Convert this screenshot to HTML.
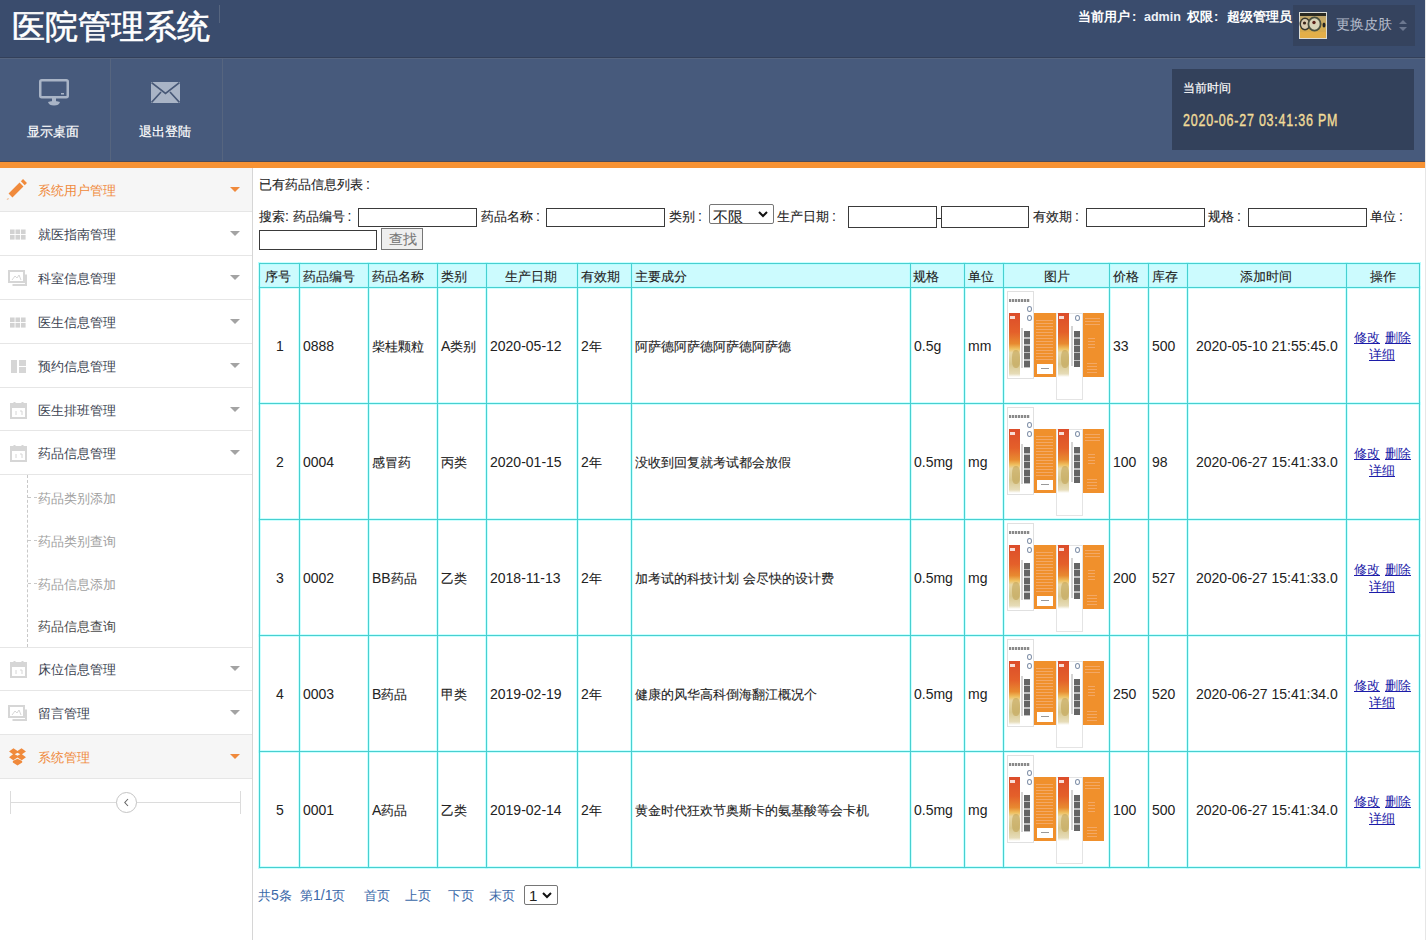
<!DOCTYPE html>
<html><head><meta charset="utf-8"><style>
*{margin:0;padding:0;box-sizing:border-box}
html,body{width:1427px;height:940px;overflow:hidden;background:#fff;font-family:"Liberation Sans",sans-serif;font-size:13px;color:#333}
.a{position:absolute;white-space:nowrap}
.l{font-size:1.077em}
.k{-webkit-text-stroke-width:0.3px}
.t17{line-height:17px}
#top{position:absolute;left:0;top:0;width:1425px;height:57px;background:#3a4c6d}
#topb{position:absolute;left:0;top:57px;width:1425px;height:1px;background:#33405a}
#tool{position:absolute;left:0;top:58px;width:1425px;height:103px;background:#475a7c}
#toolb{position:absolute;left:0;top:58px;width:1425px;height:1px;background:#55647f}
#orange{position:absolute;left:0;top:162px;width:1425px;height:6px;background:#f79233}
#orb{position:absolute;left:0;top:161px;width:1425px;height:1px;background:#4d4c58}
#rstrip{position:absolute;left:1425px;top:0;width:2px;height:940px;background:#fff;border-left:1px solid #e6e6e6}
.title{left:12px;top:5px;font-size:33px;color:#fff;line-height:44px;-webkit-text-stroke-width:0.6px}
.sep{position:absolute;background:#56657f}
.tl{color:#fff;font-size:13px;line-height:17px;-webkit-text-stroke-width:0.2px}
#side{position:absolute;left:0;top:168px;width:253px;height:772px;border-right:1px solid #d6d6d6;background:#fff}
.mi{position:absolute;left:0;width:252px;border-bottom:1px solid #e6e6e6}
.mi .t{position:absolute;left:38px;top:14px;line-height:17px;color:#3a4250;font-size:13px}
.mi.on{background:#f6f6f6}
.mi.on .t{color:#f08a3c}
.mi .arr{position:absolute;left:230px;top:19px;width:0;height:0;border-left:5px solid transparent;border-right:5px solid transparent;border-top:5px solid #a3a3a3}
.mi.on .arr{border-top-color:#f08a3c}
.mi svg{position:absolute;left:8px;top:12px}
.st{position:absolute;left:38px;line-height:17px;color:#a0a0a0}
.ln{position:absolute;background:#48cfd0}
.lh{position:absolute;background:rgba(170,255,255,.6)}
.c{position:absolute;white-space:nowrap;line-height:17px;color:#222;-webkit-text-stroke-width:0.1px}
.lnk{color:#1c1ca8;text-decoration:underline;-webkit-text-stroke-width:0!important}
.c .l{-webkit-text-stroke-width:0}
.inp{position:absolute;border:1px solid #3a3a3a;background:#fff}
.pg{position:absolute;color:#3a68a8;line-height:17px}
</style></head><body>
<div id="top"></div><div id="topb"></div><div id="tool"></div><div id="toolb"></div><div id="orange"></div><div id="orb"></div><div id="rstrip"></div>
<div class="a title">医院管理系统</div>
<div class="sep" style="left:219px;top:5px;width:1px;height:18px"></div>
<div class="a t17" style="left:1078px;top:8px;color:#fff;font-weight:bold">当前用户</div>
<div class="a t17" style="left:1187px;top:8px;color:#fff;font-weight:bold">权限</div>
<div class="a t17" style="left:1227px;top:8px;color:#fff;font-weight:bold">超级管理员</div>
<div class="a t17" style="left:1132px;top:8px;color:#fff;font-weight:bold">:</div>
<div class="a t17" style="left:1214px;top:8px;color:#fff;font-weight:bold">:</div>
<div class="a t17" style="left:1144px;top:9px;color:#eef2f8;font-weight:bold;font-size:12.5px">admin</div>
<div class="a" style="left:1293px;top:5px;width:122px;height:41px;background:#35435e"></div>
<svg class="a" style="left:1299px;top:12px" width="28" height="27" viewBox="0 0 28 27"><defs><linearGradient id="mg" x1="0" y1="0" x2="0" y2="1"><stop offset="0" stop-color="#b7a070"/><stop offset="0.5" stop-color="#cfae5a"/><stop offset="1" stop-color="#e0a640"/></linearGradient></defs><rect x="0" y="0" width="28" height="27" fill="#dcdcd4"/><rect x="1" y="1" width="26" height="25" fill="url(#mg)"/><rect x="1" y="1" width="26" height="3" fill="#2a2a22"/><ellipse cx="6" cy="12" rx="5.5" ry="6.5" fill="#3a3a30"/><ellipse cx="6" cy="12" rx="4" ry="5" fill="#d9ccb0"/><circle cx="5.5" cy="11" r="1.6" fill="#3a2418"/><ellipse cx="15.5" cy="12" rx="7" ry="7.5" fill="#4a5040"/><ellipse cx="15.5" cy="12" rx="5.2" ry="5.8" fill="#d8d4b8"/><circle cx="15" cy="10.5" r="1.7" fill="#5a2018"/><ellipse cx="25" cy="13" rx="1.5" ry="2.5" fill="#222"/><rect x="1" y="20" width="26" height="6" fill="#e5b04a" opacity="0.8"/></svg>
<div class="a t17" style="left:1336px;top:16px;color:#b4bccb;font-size:14px">更换皮肤</div>
<svg class="a" style="left:1398px;top:19px" width="10" height="13" viewBox="0 0 10 13" fill="#6c7890"><path d="M1 5 L5 1 L9 5Z M1 8 L5 12 L9 8Z"/></svg>
<div class="sep" style="left:110px;top:58px;width:1px;height:103px"></div>
<div class="sep" style="left:222px;top:58px;width:1px;height:103px"></div>
<svg class="a" style="left:39px;top:79px" width="30" height="27" viewBox="0 0 30 27"><rect x="1.25" y="1.25" width="27.5" height="17" rx="1.5" fill="none" stroke="#a9b4c6" stroke-width="2.5"/><rect x="22" y="14" width="3" height="1.5" fill="#a9b4c6"/><rect x="13" y="19" width="4" height="4" fill="#a9b4c6"/><path d="M9 23 Q15 21 21 23 Q20 26.5 15 26.5 Q10 26.5 9 23Z" fill="#a9b4c6"/></svg>
<div class="a tl" style="left:27px;top:123px">显示桌面</div>
<svg class="a" style="left:151px;top:82px" width="29" height="21" viewBox="0 0 29 21"><rect x="0" y="0" width="29" height="21" fill="#a9b4c6"/><path d="M0.5 0.5 L14.5 11.5 L28.5 0.5 M0.5 20.5 L10 10 M28.5 20.5 L19 10" fill="none" stroke="#475877" stroke-width="1.6"/></svg>
<div class="a tl" style="left:139px;top:123px">退出登陆</div>
<div class="a" style="left:1172px;top:69px;width:242px;height:81px;background:#33415b"></div>
<div class="a t17" style="left:1183px;top:80px;color:#fff;font-size:12px;-webkit-text-stroke-width:0.15px">当前时间</div>
<div class="a t17" style="left:1183px;top:112px;color:#f0db98;font-size:16px;-webkit-text-stroke-width:0.4px;letter-spacing:1px;transform:scaleX(0.78);transform-origin:0 0">2020-06-27 03:41:36 PM</div>
<div id="side"></div>
<div class="mi on" style="top:168px;height:44px"><svg width="24" height="24" viewBox="0 0 24 24" style="left:4px;top:10px"><g stroke="#f08a3c" stroke-width="5.5" fill="none"><path d="M6.5 17.5 L17.5 6.5" /><path d="M18.8 5.2 L21 3"/></g><path d="M4 20 L2.5 22 L5 21Z" fill="#f08a3c" opacity="0.7"/></svg><div class="t">系统用户管理</div><div class="arr"></div></div>
<div class="mi" style="top:212px;height:44px"><svg width="20" height="20" viewBox="0 0 20 20" fill="#d2d2d2"><rect x="2" y="5.5" width="4.6" height="4.6"/><rect x="7.5" y="5.5" width="4.6" height="4.6"/><rect x="13" y="5.5" width="4.6" height="4.6"/><rect x="2" y="11" width="4.6" height="4.6"/><rect x="7.5" y="11" width="4.6" height="4.6"/><rect x="13" y="11" width="4.6" height="4.6"/></svg><div class="t">就医指南管理</div><div class="arr"></div></div>
<div class="mi" style="top:256px;height:44px"><svg width="20" height="20" viewBox="0 0 20 20" style="left:8px;top:12px" fill="none" stroke="#d6d6d6"><rect x="1" y="3" width="15" height="11" stroke-width="2"/><path d="M4.5 17 H18 V6.5" stroke-width="2"/><path d="M4 12 L7 8 L9 10 L11 7 L13 12" stroke-width="1"/></svg><div class="t">科室信息管理</div><div class="arr"></div></div>
<div class="mi" style="top:300px;height:44px"><svg width="20" height="20" viewBox="0 0 20 20" fill="#d2d2d2"><rect x="2" y="5.5" width="4.6" height="4.6"/><rect x="7.5" y="5.5" width="4.6" height="4.6"/><rect x="13" y="5.5" width="4.6" height="4.6"/><rect x="2" y="11" width="4.6" height="4.6"/><rect x="7.5" y="11" width="4.6" height="4.6"/><rect x="13" y="11" width="4.6" height="4.6"/></svg><div class="t">医生信息管理</div><div class="arr"></div></div>
<div class="mi" style="top:344px;height:44px"><svg width="20" height="20" viewBox="0 0 20 20" fill="#d6d6d6"><rect x="3" y="4" width="6" height="13"/><rect x="11" y="4" width="7" height="6"/><rect x="11" y="11" width="7" height="6"/></svg><div class="t">预约信息管理</div><div class="arr"></div></div>
<div class="mi" style="top:388px;height:43px"><svg width="20" height="20" viewBox="0 0 20 20" style="left:8px;top:12px"><rect x="3" y="4" width="15" height="14" fill="none" stroke="#d6d6d6" stroke-width="2"/><rect x="3" y="4" width="15" height="4" fill="#d6d6d6"/><path d="M6.5 2 V5 M14.5 2 V5" stroke="#d6d6d6" stroke-width="2"/><path d="M8 11 V15 M12 11 H14 V15" stroke="#d6d6d6" stroke-width="1" fill="none"/></svg><div class="t">医生排班管理</div><div class="arr"></div></div>
<div class="mi" style="top:431px;height:44px"><svg width="20" height="20" viewBox="0 0 20 20" style="left:8px;top:12px"><rect x="3" y="4" width="15" height="14" fill="none" stroke="#d6d6d6" stroke-width="2"/><rect x="3" y="4" width="15" height="4" fill="#d6d6d6"/><path d="M6.5 2 V5 M14.5 2 V5" stroke="#d6d6d6" stroke-width="2"/><path d="M8 11 V15 M12 11 H14 V15" stroke="#d6d6d6" stroke-width="1" fill="none"/></svg><div class="t">药品信息管理</div><div class="arr"></div></div>
<div class="mi" style="top:647px;height:44px"><svg width="20" height="20" viewBox="0 0 20 20" style="left:8px;top:12px"><rect x="3" y="4" width="15" height="14" fill="none" stroke="#d6d6d6" stroke-width="2"/><rect x="3" y="4" width="15" height="4" fill="#d6d6d6"/><path d="M6.5 2 V5 M14.5 2 V5" stroke="#d6d6d6" stroke-width="2"/><path d="M8 11 V15 M12 11 H14 V15" stroke="#d6d6d6" stroke-width="1" fill="none"/></svg><div class="t">床位信息管理</div><div class="arr"></div></div>
<div class="mi" style="top:691px;height:44px"><svg width="20" height="20" viewBox="0 0 20 20" style="left:8px;top:12px" fill="none" stroke="#d6d6d6"><rect x="1" y="3" width="15" height="11" stroke-width="2"/><path d="M4.5 17 H18 V6.5" stroke-width="2"/><path d="M4 12 L7 8 L9 10 L11 7 L13 12" stroke-width="1"/></svg><div class="t">留言管理</div><div class="arr"></div></div>
<div class="mi on" style="top:735px;height:44px"><svg width="17" height="18" viewBox="0 0 16 17" style="left:9px;top:13px" fill="#f08a3c"><path d="M0 3.2 L4.2 0.3 L8 2.8 L11.8 0.3 L16 3.2 L12.2 6 L16 8.8 L12 11.5 L8 8.9 L4 11.5 L0 8.8 L3.8 6Z"/><path d="M8 4.6 L10.6 6 L8 7.4 L5.4 6Z" fill="#f6f6f6"/><path d="M3.6 12.3 L8 10.2 L12.4 12.3 L12.4 13.6 L8 16.6 L3.6 13.6Z"/></svg><div class="t">系统管理</div><div class="arr"></div></div>
<div class="a" style="left:27px;top:475px;height:172px;border-left:1px dashed #c8c8c8"></div>
<div class="a" style="left:0;top:647px;width:252px;height:1px;background:#e6e6e6"></div>
<div class="a" style="left:28px;top:497px;width:9px;border-top:1px dashed #c8c8c8"></div>
<div class="st" style="top:490px;color:#a0a0a0">药品类别添加</div>
<div class="a" style="left:28px;top:540px;width:9px;border-top:1px dashed #c8c8c8"></div>
<div class="st" style="top:533px;color:#a0a0a0">药品类别查询</div>
<div class="a" style="left:28px;top:583px;width:9px;border-top:1px dashed #c8c8c8"></div>
<div class="st" style="top:576px;color:#a0a0a0">药品信息添加</div>
<div class="st" style="top:618px;color:#4a4a4a">药品信息查询</div>
<div class="a" style="left:10px;top:802px;width:231px;height:1px;background:#dcdcdc"></div>
<div class="a" style="left:10px;top:791px;width:1px;height:23px;background:#dcdcdc"></div>
<div class="a" style="left:240px;top:791px;width:1px;height:23px;background:#dcdcdc"></div>
<div class="a" style="left:116px;top:792px;width:21px;height:21px;border:1.5px solid #c4c4c4;border-radius:50%;background:#fff"></div>
<svg class="a" style="left:121px;top:797px" width="11" height="11" viewBox="0 0 11 11"><path d="M7 2 L3.8 5.5 L7 9" fill="none" stroke="#666" stroke-width="1.1"/></svg>
<div class="c" style="left:259px;top:176px">已有药品信息列表<span style="margin-left:3px"><span class="l">:</span></span></div>
<div class="c" style="left:259px;top:208px">搜索<span class="l">:</span> 药品编号<span style="margin-left:3px"><span class="l">:</span></span></div>
<div class="inp" style="left:358px;top:208px;width:119px;height:19px"></div>
<div class="c" style="left:481px;top:208px">药品名称<span style="margin-left:3px"><span class="l">:</span></span></div>
<div class="inp" style="left:546px;top:208px;width:119px;height:19px"></div>
<div class="c" style="left:669px;top:208px">类别<span style="margin-left:3px"><span class="l">:</span></span></div>
<div class="a" style="left:709px;top:204px;width:65px;height:20px;border:1px solid #767676;border-radius:2px;background:#fff;overflow:hidden"><div class="c" style="left:3px;top:4px;font-size:14.5px">不限</div></div>
<svg class="a" style="left:757px;top:209px" width="12" height="10" viewBox="0 0 12 10"><path d="M2 3 L6 7 L10 3" fill="none" stroke="#111" stroke-width="2"/></svg>
<div class="c" style="left:777px;top:208px">生产日期<span style="margin-left:3px"><span class="l">:</span></span></div>
<div class="inp" style="left:848px;top:206px;width:89px;height:22px"></div>
<div class="a" style="left:937px;top:218px;width:4px;height:1px;background:#222"></div>
<div class="inp" style="left:941px;top:206px;width:88px;height:22px"></div>
<div class="c" style="left:1033px;top:208px">有效期<span style="margin-left:3px"><span class="l">:</span></span></div>
<div class="inp" style="left:1086px;top:208px;width:119px;height:19px"></div>
<div class="c" style="left:1208px;top:208px">规格<span style="margin-left:3px"><span class="l">:</span></span></div>
<div class="inp" style="left:1248px;top:208px;width:119px;height:19px"></div>
<div class="c" style="left:1370px;top:208px">单位<span style="margin-left:3px"><span class="l">:</span></span></div>
<div class="inp" style="left:259px;top:230px;width:118px;height:20px"></div>
<div class="a" style="left:381px;top:228px;width:42px;height:22px;border:1px solid #767676;background:#efefef"></div>
<div class="c" style="left:389px;top:231px;color:#777;font-size:14px">查找</div>
<div class="a" style="left:259px;top:263px;width:1160px;height:24px;background:#ccfbfe"></div>
<div class="lh" style="left:258px;top:262px;width:3px;height:607px"></div>
<div class="lh" style="left:298px;top:262px;width:3px;height:607px"></div>
<div class="lh" style="left:367px;top:262px;width:3px;height:607px"></div>
<div class="lh" style="left:436px;top:262px;width:3px;height:607px"></div>
<div class="lh" style="left:485px;top:262px;width:3px;height:607px"></div>
<div class="lh" style="left:576px;top:262px;width:3px;height:607px"></div>
<div class="lh" style="left:630px;top:262px;width:3px;height:607px"></div>
<div class="lh" style="left:909px;top:262px;width:3px;height:607px"></div>
<div class="lh" style="left:963px;top:262px;width:3px;height:607px"></div>
<div class="lh" style="left:1002px;top:262px;width:3px;height:607px"></div>
<div class="lh" style="left:1108px;top:262px;width:3px;height:607px"></div>
<div class="lh" style="left:1147px;top:262px;width:3px;height:607px"></div>
<div class="lh" style="left:1186px;top:262px;width:3px;height:607px"></div>
<div class="lh" style="left:1345px;top:262px;width:3px;height:607px"></div>
<div class="lh" style="left:1418px;top:262px;width:3px;height:607px"></div>
<div class="lh" style="left:258px;top:262px;width:1163px;height:3px"></div>
<div class="lh" style="left:258px;top:286px;width:1163px;height:3px"></div>
<div class="lh" style="left:258px;top:402px;width:1163px;height:3px"></div>
<div class="lh" style="left:258px;top:518px;width:1163px;height:3px"></div>
<div class="lh" style="left:258px;top:634px;width:1163px;height:3px"></div>
<div class="lh" style="left:258px;top:750px;width:1163px;height:3px"></div>
<div class="lh" style="left:258px;top:866px;width:1163px;height:3px"></div>
<div class="ln" style="left:259px;top:263px;width:1px;height:605px"></div>
<div class="ln" style="left:299px;top:263px;width:1px;height:605px"></div>
<div class="ln" style="left:368px;top:263px;width:1px;height:605px"></div>
<div class="ln" style="left:437px;top:263px;width:1px;height:605px"></div>
<div class="ln" style="left:486px;top:263px;width:1px;height:605px"></div>
<div class="ln" style="left:577px;top:263px;width:1px;height:605px"></div>
<div class="ln" style="left:631px;top:263px;width:1px;height:605px"></div>
<div class="ln" style="left:910px;top:263px;width:1px;height:605px"></div>
<div class="ln" style="left:964px;top:263px;width:1px;height:605px"></div>
<div class="ln" style="left:1003px;top:263px;width:1px;height:605px"></div>
<div class="ln" style="left:1109px;top:263px;width:1px;height:605px"></div>
<div class="ln" style="left:1148px;top:263px;width:1px;height:605px"></div>
<div class="ln" style="left:1187px;top:263px;width:1px;height:605px"></div>
<div class="ln" style="left:1346px;top:263px;width:1px;height:605px"></div>
<div class="ln" style="left:1419px;top:263px;width:1px;height:605px"></div>
<div class="ln" style="left:259px;top:263px;width:1161px;height:1px"></div>
<div class="ln" style="left:259px;top:287px;width:1161px;height:1px"></div>
<div class="ln" style="left:259px;top:403px;width:1161px;height:1px"></div>
<div class="ln" style="left:259px;top:519px;width:1161px;height:1px"></div>
<div class="ln" style="left:259px;top:635px;width:1161px;height:1px"></div>
<div class="ln" style="left:259px;top:751px;width:1161px;height:1px"></div>
<div class="ln" style="left:259px;top:867px;width:1161px;height:1px"></div>
<div class="c" style="left:265px;top:268px">序号</div>
<div class="c" style="left:303px;top:268px">药品编号</div>
<div class="c" style="left:372px;top:268px">药品名称</div>
<div class="c" style="left:441px;top:268px">类别</div>
<div class="c" style="left:505px;top:268px">生产日期</div>
<div class="c" style="left:581px;top:268px">有效期</div>
<div class="c" style="left:635px;top:268px">主要成分</div>
<div class="c" style="left:913px;top:268px">规格</div>
<div class="c" style="left:968px;top:268px">单位</div>
<div class="c" style="left:1044px;top:268px">图片</div>
<div class="c" style="left:1113px;top:268px">价格</div>
<div class="c" style="left:1152px;top:268px">库存</div>
<div class="c" style="left:1240px;top:268px">添加时间</div>
<div class="c" style="left:1370px;top:268px">操作</div>
<div class="c" style="left:276px;top:338px"><span class="l">1</span></div>
<div class="c" style="left:303px;top:338px"><span class="l">0888</span></div>
<div class="c" style="left:372px;top:338px">柴桂颗粒</div>
<div class="c" style="left:441px;top:338px"><span class="l">A</span>类别</div>
<div class="c" style="left:490px;top:338px"><span class="l">2020-05-12</span></div>
<div class="c" style="left:581px;top:338px"><span class="l">2</span>年</div>
<div class="c" style="left:635px;top:338px">阿萨德阿萨德阿萨德阿萨德</div>
<div class="c" style="left:914px;top:338px"><span class="l">0.5g</span></div>
<div class="c" style="left:968px;top:338px"><span class="l">mm</span></div>
<div class="c" style="left:1113px;top:338px"><span class="l">33</span></div>
<div class="c" style="left:1152px;top:338px"><span class="l">500</span></div>
<div class="c" style="left:1196px;top:338px"><span class="l">2020-05-10 21:55:45.0</span></div>
<div class="a" style="left:1003px;top:288px;width:104px;height:114px"><div class="a" style="left:4px;top:3px;width:27px;height:88px;border:1px solid #e0e0e0;background:#fff"></div><div class="a" style="left:6px;top:11px;width:21px;height:3px;background:repeating-linear-gradient(90deg,#8a8a8a 0 2px,#e0e0e0 2px 3px)"></div><div class="a" style="left:24px;top:18px;width:5px;height:6px;border:1px solid #8090a8;border-radius:50%"></div><div class="a" style="left:24px;top:27px;width:5px;height:6px;border:1px solid #8090a8;border-radius:50%"></div><div class="a" style="left:6px;top:25px;width:11px;height:64px;background:linear-gradient(#dc4c2a 0%,#e4602a 30%,#e88a30 48%,#efc060 56%,#e8d8a8 62%,#d8c890 80%,#e6dcb8 95%,#fff 100%)"></div><div class="a" style="left:7px;top:28px;width:5px;height:3px;background:#fff;opacity:.8"></div><div class="a" style="left:9px;top:62px;width:8px;height:18px;background:#c0a050;opacity:.55;border-radius:40%"></div><div class="a" style="left:21px;top:43px;width:6px;height:37px;background:repeating-linear-gradient(#3e3e3e 0 6px,#b0b0b0 6px 7.5px);opacity:.8"></div><div class="a" style="left:18px;top:40px;width:2px;height:40px;background:#b8b8b8;opacity:.6"></div><div class="a" style="left:31px;top:25px;width:22px;height:64px;background:#f0902c"></div><div class="a" style="left:33px;top:32px;width:17px;height:40px;background:repeating-linear-gradient(#f3a865 0 1px,#f0902c 1px 3px)"></div><div class="a" style="left:34px;top:76px;width:16px;height:10px;background:#fff"></div><div class="a" style="left:38px;top:80px;width:8px;height:1px;background:#999"></div><div class="a" style="left:53px;top:25px;width:27px;height:87px;border:1px solid #e4e4e4;background:#fff"></div><div class="a" style="left:55px;top:25px;width:11px;height:64px;background:linear-gradient(#dc4c2a 0%,#e4602a 30%,#e88a30 48%,#efc060 56%,#e8d8a8 62%,#d8c890 80%,#e6dcb8 95%,#fff 100%)"></div><div class="a" style="left:56px;top:28px;width:5px;height:3px;background:#fff;opacity:.8"></div><div class="a" style="left:58px;top:62px;width:8px;height:18px;background:#c0a050;opacity:.55;border-radius:40%"></div><div class="a" style="left:72px;top:27px;width:5px;height:6px;border:1px solid #8090a8;border-radius:50%"></div><div class="a" style="left:71px;top:43px;width:6px;height:36px;background:repeating-linear-gradient(#3e3e3e 0 6px,#b0b0b0 6px 7.5px);opacity:.8"></div><div class="a" style="left:68px;top:38px;width:2px;height:40px;background:#b8b8b8;opacity:.6"></div><div class="a" style="left:80px;top:25px;width:21px;height:64px;background:#f0902c"></div><div class="a" style="left:82px;top:30px;width:15px;height:8px;background:repeating-linear-gradient(#f3a865 0 1px,#f0902c 1px 3px)"></div><div class="a" style="left:85px;top:50px;width:7px;height:10px;background:repeating-linear-gradient(#f3a865 0 1px,#f0902c 1px 3px)"></div><div class="a" style="left:84px;top:75px;width:10px;height:10px;background:repeating-linear-gradient(#f3a865 0 1px,#f0902c 1px 3px)"></div></div>
<div class="c lnk" style="left:1354px;top:329px">修改</div>
<div class="c lnk" style="left:1385px;top:329px">删除</div>
<div class="c lnk" style="left:1369px;top:346px">详细</div>
<div class="c" style="left:276px;top:454px"><span class="l">2</span></div>
<div class="c" style="left:303px;top:454px"><span class="l">0004</span></div>
<div class="c" style="left:372px;top:454px">感冒药</div>
<div class="c" style="left:441px;top:454px">丙类</div>
<div class="c" style="left:490px;top:454px"><span class="l">2020-01-15</span></div>
<div class="c" style="left:581px;top:454px"><span class="l">2</span>年</div>
<div class="c" style="left:635px;top:454px">没收到回复就考试都会放假</div>
<div class="c" style="left:914px;top:454px"><span class="l">0.5mg</span></div>
<div class="c" style="left:968px;top:454px"><span class="l">mg</span></div>
<div class="c" style="left:1113px;top:454px"><span class="l">100</span></div>
<div class="c" style="left:1152px;top:454px"><span class="l">98</span></div>
<div class="c" style="left:1196px;top:454px"><span class="l">2020-06-27 15:41:33.0</span></div>
<div class="a" style="left:1003px;top:404px;width:104px;height:114px"><div class="a" style="left:4px;top:3px;width:27px;height:88px;border:1px solid #e0e0e0;background:#fff"></div><div class="a" style="left:6px;top:11px;width:21px;height:3px;background:repeating-linear-gradient(90deg,#8a8a8a 0 2px,#e0e0e0 2px 3px)"></div><div class="a" style="left:24px;top:18px;width:5px;height:6px;border:1px solid #8090a8;border-radius:50%"></div><div class="a" style="left:24px;top:27px;width:5px;height:6px;border:1px solid #8090a8;border-radius:50%"></div><div class="a" style="left:6px;top:25px;width:11px;height:64px;background:linear-gradient(#dc4c2a 0%,#e4602a 30%,#e88a30 48%,#efc060 56%,#e8d8a8 62%,#d8c890 80%,#e6dcb8 95%,#fff 100%)"></div><div class="a" style="left:7px;top:28px;width:5px;height:3px;background:#fff;opacity:.8"></div><div class="a" style="left:9px;top:62px;width:8px;height:18px;background:#c0a050;opacity:.55;border-radius:40%"></div><div class="a" style="left:21px;top:43px;width:6px;height:37px;background:repeating-linear-gradient(#3e3e3e 0 6px,#b0b0b0 6px 7.5px);opacity:.8"></div><div class="a" style="left:18px;top:40px;width:2px;height:40px;background:#b8b8b8;opacity:.6"></div><div class="a" style="left:31px;top:25px;width:22px;height:64px;background:#f0902c"></div><div class="a" style="left:33px;top:32px;width:17px;height:40px;background:repeating-linear-gradient(#f3a865 0 1px,#f0902c 1px 3px)"></div><div class="a" style="left:34px;top:76px;width:16px;height:10px;background:#fff"></div><div class="a" style="left:38px;top:80px;width:8px;height:1px;background:#999"></div><div class="a" style="left:53px;top:25px;width:27px;height:87px;border:1px solid #e4e4e4;background:#fff"></div><div class="a" style="left:55px;top:25px;width:11px;height:64px;background:linear-gradient(#dc4c2a 0%,#e4602a 30%,#e88a30 48%,#efc060 56%,#e8d8a8 62%,#d8c890 80%,#e6dcb8 95%,#fff 100%)"></div><div class="a" style="left:56px;top:28px;width:5px;height:3px;background:#fff;opacity:.8"></div><div class="a" style="left:58px;top:62px;width:8px;height:18px;background:#c0a050;opacity:.55;border-radius:40%"></div><div class="a" style="left:72px;top:27px;width:5px;height:6px;border:1px solid #8090a8;border-radius:50%"></div><div class="a" style="left:71px;top:43px;width:6px;height:36px;background:repeating-linear-gradient(#3e3e3e 0 6px,#b0b0b0 6px 7.5px);opacity:.8"></div><div class="a" style="left:68px;top:38px;width:2px;height:40px;background:#b8b8b8;opacity:.6"></div><div class="a" style="left:80px;top:25px;width:21px;height:64px;background:#f0902c"></div><div class="a" style="left:82px;top:30px;width:15px;height:8px;background:repeating-linear-gradient(#f3a865 0 1px,#f0902c 1px 3px)"></div><div class="a" style="left:85px;top:50px;width:7px;height:10px;background:repeating-linear-gradient(#f3a865 0 1px,#f0902c 1px 3px)"></div><div class="a" style="left:84px;top:75px;width:10px;height:10px;background:repeating-linear-gradient(#f3a865 0 1px,#f0902c 1px 3px)"></div></div>
<div class="c lnk" style="left:1354px;top:445px">修改</div>
<div class="c lnk" style="left:1385px;top:445px">删除</div>
<div class="c lnk" style="left:1369px;top:462px">详细</div>
<div class="c" style="left:276px;top:570px"><span class="l">3</span></div>
<div class="c" style="left:303px;top:570px"><span class="l">0002</span></div>
<div class="c" style="left:372px;top:570px"><span class="l">BB</span>药品</div>
<div class="c" style="left:441px;top:570px">乙类</div>
<div class="c" style="left:490px;top:570px"><span class="l">2018-11-13</span></div>
<div class="c" style="left:581px;top:570px"><span class="l">2</span>年</div>
<div class="c" style="left:635px;top:570px">加考试的科技计划 会尽快的设计费</div>
<div class="c" style="left:914px;top:570px"><span class="l">0.5mg</span></div>
<div class="c" style="left:968px;top:570px"><span class="l">mg</span></div>
<div class="c" style="left:1113px;top:570px"><span class="l">200</span></div>
<div class="c" style="left:1152px;top:570px"><span class="l">527</span></div>
<div class="c" style="left:1196px;top:570px"><span class="l">2020-06-27 15:41:33.0</span></div>
<div class="a" style="left:1003px;top:520px;width:104px;height:114px"><div class="a" style="left:4px;top:3px;width:27px;height:88px;border:1px solid #e0e0e0;background:#fff"></div><div class="a" style="left:6px;top:11px;width:21px;height:3px;background:repeating-linear-gradient(90deg,#8a8a8a 0 2px,#e0e0e0 2px 3px)"></div><div class="a" style="left:24px;top:18px;width:5px;height:6px;border:1px solid #8090a8;border-radius:50%"></div><div class="a" style="left:24px;top:27px;width:5px;height:6px;border:1px solid #8090a8;border-radius:50%"></div><div class="a" style="left:6px;top:25px;width:11px;height:64px;background:linear-gradient(#dc4c2a 0%,#e4602a 30%,#e88a30 48%,#efc060 56%,#e8d8a8 62%,#d8c890 80%,#e6dcb8 95%,#fff 100%)"></div><div class="a" style="left:7px;top:28px;width:5px;height:3px;background:#fff;opacity:.8"></div><div class="a" style="left:9px;top:62px;width:8px;height:18px;background:#c0a050;opacity:.55;border-radius:40%"></div><div class="a" style="left:21px;top:43px;width:6px;height:37px;background:repeating-linear-gradient(#3e3e3e 0 6px,#b0b0b0 6px 7.5px);opacity:.8"></div><div class="a" style="left:18px;top:40px;width:2px;height:40px;background:#b8b8b8;opacity:.6"></div><div class="a" style="left:31px;top:25px;width:22px;height:64px;background:#f0902c"></div><div class="a" style="left:33px;top:32px;width:17px;height:40px;background:repeating-linear-gradient(#f3a865 0 1px,#f0902c 1px 3px)"></div><div class="a" style="left:34px;top:76px;width:16px;height:10px;background:#fff"></div><div class="a" style="left:38px;top:80px;width:8px;height:1px;background:#999"></div><div class="a" style="left:53px;top:25px;width:27px;height:87px;border:1px solid #e4e4e4;background:#fff"></div><div class="a" style="left:55px;top:25px;width:11px;height:64px;background:linear-gradient(#dc4c2a 0%,#e4602a 30%,#e88a30 48%,#efc060 56%,#e8d8a8 62%,#d8c890 80%,#e6dcb8 95%,#fff 100%)"></div><div class="a" style="left:56px;top:28px;width:5px;height:3px;background:#fff;opacity:.8"></div><div class="a" style="left:58px;top:62px;width:8px;height:18px;background:#c0a050;opacity:.55;border-radius:40%"></div><div class="a" style="left:72px;top:27px;width:5px;height:6px;border:1px solid #8090a8;border-radius:50%"></div><div class="a" style="left:71px;top:43px;width:6px;height:36px;background:repeating-linear-gradient(#3e3e3e 0 6px,#b0b0b0 6px 7.5px);opacity:.8"></div><div class="a" style="left:68px;top:38px;width:2px;height:40px;background:#b8b8b8;opacity:.6"></div><div class="a" style="left:80px;top:25px;width:21px;height:64px;background:#f0902c"></div><div class="a" style="left:82px;top:30px;width:15px;height:8px;background:repeating-linear-gradient(#f3a865 0 1px,#f0902c 1px 3px)"></div><div class="a" style="left:85px;top:50px;width:7px;height:10px;background:repeating-linear-gradient(#f3a865 0 1px,#f0902c 1px 3px)"></div><div class="a" style="left:84px;top:75px;width:10px;height:10px;background:repeating-linear-gradient(#f3a865 0 1px,#f0902c 1px 3px)"></div></div>
<div class="c lnk" style="left:1354px;top:561px">修改</div>
<div class="c lnk" style="left:1385px;top:561px">删除</div>
<div class="c lnk" style="left:1369px;top:578px">详细</div>
<div class="c" style="left:276px;top:686px"><span class="l">4</span></div>
<div class="c" style="left:303px;top:686px"><span class="l">0003</span></div>
<div class="c" style="left:372px;top:686px"><span class="l">B</span>药品</div>
<div class="c" style="left:441px;top:686px">甲类</div>
<div class="c" style="left:490px;top:686px"><span class="l">2019-02-19</span></div>
<div class="c" style="left:581px;top:686px"><span class="l">2</span>年</div>
<div class="c" style="left:635px;top:686px">健康的风华高科倒海翻江概况个</div>
<div class="c" style="left:914px;top:686px"><span class="l">0.5mg</span></div>
<div class="c" style="left:968px;top:686px"><span class="l">mg</span></div>
<div class="c" style="left:1113px;top:686px"><span class="l">250</span></div>
<div class="c" style="left:1152px;top:686px"><span class="l">520</span></div>
<div class="c" style="left:1196px;top:686px"><span class="l">2020-06-27 15:41:34.0</span></div>
<div class="a" style="left:1003px;top:636px;width:104px;height:114px"><div class="a" style="left:4px;top:3px;width:27px;height:88px;border:1px solid #e0e0e0;background:#fff"></div><div class="a" style="left:6px;top:11px;width:21px;height:3px;background:repeating-linear-gradient(90deg,#8a8a8a 0 2px,#e0e0e0 2px 3px)"></div><div class="a" style="left:24px;top:18px;width:5px;height:6px;border:1px solid #8090a8;border-radius:50%"></div><div class="a" style="left:24px;top:27px;width:5px;height:6px;border:1px solid #8090a8;border-radius:50%"></div><div class="a" style="left:6px;top:25px;width:11px;height:64px;background:linear-gradient(#dc4c2a 0%,#e4602a 30%,#e88a30 48%,#efc060 56%,#e8d8a8 62%,#d8c890 80%,#e6dcb8 95%,#fff 100%)"></div><div class="a" style="left:7px;top:28px;width:5px;height:3px;background:#fff;opacity:.8"></div><div class="a" style="left:9px;top:62px;width:8px;height:18px;background:#c0a050;opacity:.55;border-radius:40%"></div><div class="a" style="left:21px;top:43px;width:6px;height:37px;background:repeating-linear-gradient(#3e3e3e 0 6px,#b0b0b0 6px 7.5px);opacity:.8"></div><div class="a" style="left:18px;top:40px;width:2px;height:40px;background:#b8b8b8;opacity:.6"></div><div class="a" style="left:31px;top:25px;width:22px;height:64px;background:#f0902c"></div><div class="a" style="left:33px;top:32px;width:17px;height:40px;background:repeating-linear-gradient(#f3a865 0 1px,#f0902c 1px 3px)"></div><div class="a" style="left:34px;top:76px;width:16px;height:10px;background:#fff"></div><div class="a" style="left:38px;top:80px;width:8px;height:1px;background:#999"></div><div class="a" style="left:53px;top:25px;width:27px;height:87px;border:1px solid #e4e4e4;background:#fff"></div><div class="a" style="left:55px;top:25px;width:11px;height:64px;background:linear-gradient(#dc4c2a 0%,#e4602a 30%,#e88a30 48%,#efc060 56%,#e8d8a8 62%,#d8c890 80%,#e6dcb8 95%,#fff 100%)"></div><div class="a" style="left:56px;top:28px;width:5px;height:3px;background:#fff;opacity:.8"></div><div class="a" style="left:58px;top:62px;width:8px;height:18px;background:#c0a050;opacity:.55;border-radius:40%"></div><div class="a" style="left:72px;top:27px;width:5px;height:6px;border:1px solid #8090a8;border-radius:50%"></div><div class="a" style="left:71px;top:43px;width:6px;height:36px;background:repeating-linear-gradient(#3e3e3e 0 6px,#b0b0b0 6px 7.5px);opacity:.8"></div><div class="a" style="left:68px;top:38px;width:2px;height:40px;background:#b8b8b8;opacity:.6"></div><div class="a" style="left:80px;top:25px;width:21px;height:64px;background:#f0902c"></div><div class="a" style="left:82px;top:30px;width:15px;height:8px;background:repeating-linear-gradient(#f3a865 0 1px,#f0902c 1px 3px)"></div><div class="a" style="left:85px;top:50px;width:7px;height:10px;background:repeating-linear-gradient(#f3a865 0 1px,#f0902c 1px 3px)"></div><div class="a" style="left:84px;top:75px;width:10px;height:10px;background:repeating-linear-gradient(#f3a865 0 1px,#f0902c 1px 3px)"></div></div>
<div class="c lnk" style="left:1354px;top:677px">修改</div>
<div class="c lnk" style="left:1385px;top:677px">删除</div>
<div class="c lnk" style="left:1369px;top:694px">详细</div>
<div class="c" style="left:276px;top:802px"><span class="l">5</span></div>
<div class="c" style="left:303px;top:802px"><span class="l">0001</span></div>
<div class="c" style="left:372px;top:802px"><span class="l">A</span>药品</div>
<div class="c" style="left:441px;top:802px">乙类</div>
<div class="c" style="left:490px;top:802px"><span class="l">2019-02-14</span></div>
<div class="c" style="left:581px;top:802px"><span class="l">2</span>年</div>
<div class="c" style="left:635px;top:802px">黄金时代狂欢节奥斯卡的氨基酸等会卡机</div>
<div class="c" style="left:914px;top:802px"><span class="l">0.5mg</span></div>
<div class="c" style="left:968px;top:802px"><span class="l">mg</span></div>
<div class="c" style="left:1113px;top:802px"><span class="l">100</span></div>
<div class="c" style="left:1152px;top:802px"><span class="l">500</span></div>
<div class="c" style="left:1196px;top:802px"><span class="l">2020-06-27 15:41:34.0</span></div>
<div class="a" style="left:1003px;top:752px;width:104px;height:114px"><div class="a" style="left:4px;top:3px;width:27px;height:88px;border:1px solid #e0e0e0;background:#fff"></div><div class="a" style="left:6px;top:11px;width:21px;height:3px;background:repeating-linear-gradient(90deg,#8a8a8a 0 2px,#e0e0e0 2px 3px)"></div><div class="a" style="left:24px;top:18px;width:5px;height:6px;border:1px solid #8090a8;border-radius:50%"></div><div class="a" style="left:24px;top:27px;width:5px;height:6px;border:1px solid #8090a8;border-radius:50%"></div><div class="a" style="left:6px;top:25px;width:11px;height:64px;background:linear-gradient(#dc4c2a 0%,#e4602a 30%,#e88a30 48%,#efc060 56%,#e8d8a8 62%,#d8c890 80%,#e6dcb8 95%,#fff 100%)"></div><div class="a" style="left:7px;top:28px;width:5px;height:3px;background:#fff;opacity:.8"></div><div class="a" style="left:9px;top:62px;width:8px;height:18px;background:#c0a050;opacity:.55;border-radius:40%"></div><div class="a" style="left:21px;top:43px;width:6px;height:37px;background:repeating-linear-gradient(#3e3e3e 0 6px,#b0b0b0 6px 7.5px);opacity:.8"></div><div class="a" style="left:18px;top:40px;width:2px;height:40px;background:#b8b8b8;opacity:.6"></div><div class="a" style="left:31px;top:25px;width:22px;height:64px;background:#f0902c"></div><div class="a" style="left:33px;top:32px;width:17px;height:40px;background:repeating-linear-gradient(#f3a865 0 1px,#f0902c 1px 3px)"></div><div class="a" style="left:34px;top:76px;width:16px;height:10px;background:#fff"></div><div class="a" style="left:38px;top:80px;width:8px;height:1px;background:#999"></div><div class="a" style="left:53px;top:25px;width:27px;height:87px;border:1px solid #e4e4e4;background:#fff"></div><div class="a" style="left:55px;top:25px;width:11px;height:64px;background:linear-gradient(#dc4c2a 0%,#e4602a 30%,#e88a30 48%,#efc060 56%,#e8d8a8 62%,#d8c890 80%,#e6dcb8 95%,#fff 100%)"></div><div class="a" style="left:56px;top:28px;width:5px;height:3px;background:#fff;opacity:.8"></div><div class="a" style="left:58px;top:62px;width:8px;height:18px;background:#c0a050;opacity:.55;border-radius:40%"></div><div class="a" style="left:72px;top:27px;width:5px;height:6px;border:1px solid #8090a8;border-radius:50%"></div><div class="a" style="left:71px;top:43px;width:6px;height:36px;background:repeating-linear-gradient(#3e3e3e 0 6px,#b0b0b0 6px 7.5px);opacity:.8"></div><div class="a" style="left:68px;top:38px;width:2px;height:40px;background:#b8b8b8;opacity:.6"></div><div class="a" style="left:80px;top:25px;width:21px;height:64px;background:#f0902c"></div><div class="a" style="left:82px;top:30px;width:15px;height:8px;background:repeating-linear-gradient(#f3a865 0 1px,#f0902c 1px 3px)"></div><div class="a" style="left:85px;top:50px;width:7px;height:10px;background:repeating-linear-gradient(#f3a865 0 1px,#f0902c 1px 3px)"></div><div class="a" style="left:84px;top:75px;width:10px;height:10px;background:repeating-linear-gradient(#f3a865 0 1px,#f0902c 1px 3px)"></div></div>
<div class="c lnk" style="left:1354px;top:793px">修改</div>
<div class="c lnk" style="left:1385px;top:793px">删除</div>
<div class="c lnk" style="left:1369px;top:810px">详细</div>
<div class="pg" style="left:258px;top:887px">共<span class="l">5</span>条</div>
<div class="pg" style="left:300px;top:887px">第<span class="l">1/1</span>页</div>
<div class="pg" style="left:364px;top:887px">首页</div>
<div class="pg" style="left:405px;top:887px">上页</div>
<div class="pg" style="left:448px;top:887px">下页</div>
<div class="pg" style="left:489px;top:887px">末页</div>
<div class="a" style="left:524px;top:885px;width:34px;height:20px;border:1px solid #767676;border-radius:2px;background:#fff"></div>
<div class="c" style="left:529px;top:887px;font-size:14px"><span class="l">1</span></div>
<svg class="a" style="left:541px;top:890px" width="12" height="10" viewBox="0 0 12 10"><path d="M2 3 L6 7 L10 3" fill="none" stroke="#111" stroke-width="2"/></svg>
</body></html>
